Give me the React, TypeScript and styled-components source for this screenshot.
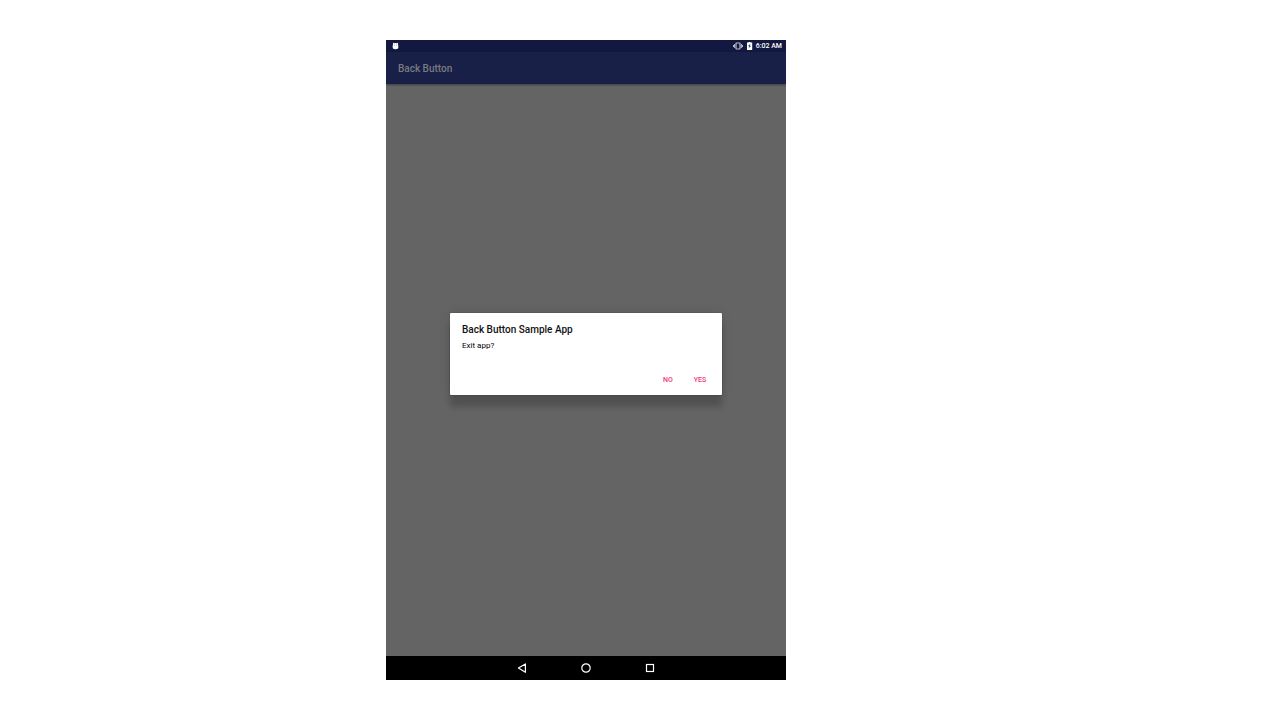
import React from 'react';
import styled, { createGlobalStyle } from 'styled-components';

const GlobalStyle = createGlobalStyle`
  *, *::before, *::after { box-sizing: border-box; }
  body {
    margin: 0;
    background: #fff;
    font-family: Roboto, "Liberation Sans", sans-serif;
  }
  button { font: inherit; border: 0; padding: 0; background: none; cursor: pointer; }
  h1, h2, p { margin: 0; }
  svg { display: block; }
`;

const Page = styled.main`
  display: flex;
  justify-content: center;
  min-height: 100vh;
  padding: 40px 108px 40px 0;
`;

const Device = styled.div`
  position: relative;
  display: flex;
  flex-direction: column;
  width: 100%;
  max-width: 400px;
  overflow: hidden;
  background: #646464;
`;

const StatusBar = styled.header`
  display: flex;
  align-items: center;
  height: 12px;
  padding: 0 4px 0 6px;
  gap: 3px;
  background: #12183f;
  color: #fff;
`;

const Clock = styled.time`
  font-size: 7px;
  line-height: 12px;
  font-weight: 500;
`;

const Spacer = styled.span`
  flex: 1;
`;

const AppBar = styled.div`
  display: flex;
  align-items: center;
  height: 32px;
  padding: 2px 12px 0;
  background: #192048;
  box-shadow: 0 1px 2px rgba(0, 0, 0, 0.4);
`;

const AppTitle = styled.h1`
  font-size: 10px;
  line-height: 16px;
  font-weight: 500;
  color: #787a80;
`;

const Content = styled.div`
  flex: 1;
`;

const NavBar = styled.nav`
  display: flex;
  justify-content: center;
  height: 24px;
  background: #000;
`;

const NavButton = styled.button`
  display: flex;
  align-items: center;
  justify-content: center;
  width: 64px;
  color: #fff;
`;

const Overlay = styled.div`
  position: absolute;
  inset: 12px 0 24px;
  display: flex;
  align-items: center;
  justify-content: center;
`;

const Dialog = styled.section`
  width: 68%;
  padding: 8px 6px 6px 12px;
  border-radius: 1px;
  background: #fff;
  box-shadow: 0 0 1px rgba(0, 0, 0, 0.6), 0 0 12px rgba(0, 0, 0, 0.1), 0 12px 6px rgba(0, 0, 0, 0.18);
`;

const DialogTitle = styled.h2`
  font-size: 10px;
  line-height: 18px;
  font-weight: 500;
  color: #111;
`;

const Message = styled.p`
  font-size: 8px;
  line-height: 14px;
  color: #000;
`;

const Actions = styled.div`
  display: flex;
  justify-content: flex-end;
  padding-top: 18px;
`;

const ActionButton = styled.button`
  && {
    width: 32px;
    height: 18px;
    font-size: 7px;
    line-height: 18px;
    font-weight: 500;
    text-align: center;
    color: #f5327a;
  }
`;

const AndroidIcon = () => (
  <svg width="7" height="8" viewBox="0 0 7 8" fill="#fff" aria-hidden="true">
    <path d="M.8 1 1.3.7 2.1 1.3Q3.5.9 4.9 1.3L5.7.7 6.2 1 5.8 1.9Q6.4 2.6 6.3 4.4V6Q5.7 7.2 3.5 7.2 1.3 7.2.7 6V4.4Q.6 2.6 1.2 1.9Z" />
    <path d="M2 2.7h.7v.7H2zM4.3 2.7H5v.7h-.7z" fill="#777c98" />
  </svg>
);

const VibrateIcon = () => (
  <svg width="10" height="8" viewBox="0 0 10 8" fill="none" stroke="#b9bccb" aria-hidden="true">
    <rect x="3" y="1" width="4" height="6" rx=".4" strokeWidth="1.2" />
    <path d="M1.6 2v4M8.4 2v4M.5 3v2M9.5 3v2" />
  </svg>
);

const BatteryIcon = () => (
  <svg width="7" height="8" viewBox="0 0 7 8" fill="#fff" aria-hidden="true">
    <path d="M2.5 0h2v.6H6.2V8H1V.6h1.5z" />
    <path d="M4.7 1.4 2.1 3.9 3.6 4.3 2.3 6.6 5 3.9 3.6 3.6z" fill="#12183f" />
  </svg>
);

const BackIcon = () => (
  <svg width="12" height="12" viewBox="0 0 12 12" fill="none" stroke="currentColor" strokeWidth="1.2" aria-hidden="true">
    <path d="M9.4 1.9v8.4L2.4 6.1z" strokeLinejoin="round" />
  </svg>
);

const HomeIcon = () => (
  <svg width="12" height="12" viewBox="0 0 12 12" fill="none" stroke="currentColor" strokeWidth="1.2" aria-hidden="true">
    <circle cx="6" cy="6" r="4.2" />
  </svg>
);

const RecentsIcon = () => (
  <svg width="12" height="12" viewBox="0 0 12 12" fill="none" stroke="currentColor" strokeWidth="1.2" aria-hidden="true">
    <rect x="2.5" y="2.5" width="7" height="7" />
  </svg>
);

export default function App() {
  return (
    <>
      <GlobalStyle />
      <Page>
        <Device>
          <StatusBar>
            <AndroidIcon />
            <Spacer />
            <VibrateIcon />
            <BatteryIcon />
            <Clock>6:02 AM</Clock>
          </StatusBar>
          <AppBar>
            <AppTitle>Back Button</AppTitle>
          </AppBar>
          <Content />
          <NavBar>
            <NavButton type="button" aria-label="Back"><BackIcon /></NavButton>
            <NavButton type="button" aria-label="Home"><HomeIcon /></NavButton>
            <NavButton type="button" aria-label="Recent apps"><RecentsIcon /></NavButton>
          </NavBar>
          <Overlay>
            <Dialog role="dialog" aria-modal="true" aria-labelledby="exit-title" aria-describedby="exit-message">
              <DialogTitle id="exit-title">Back Button Sample App</DialogTitle>
              <Message id="exit-message">Exit app?</Message>
              <Actions>
                <ActionButton type="button">NO</ActionButton>
                <ActionButton type="button">YES</ActionButton>
              </Actions>
            </Dialog>
          </Overlay>
        </Device>
      </Page>
    </>
  );
}
